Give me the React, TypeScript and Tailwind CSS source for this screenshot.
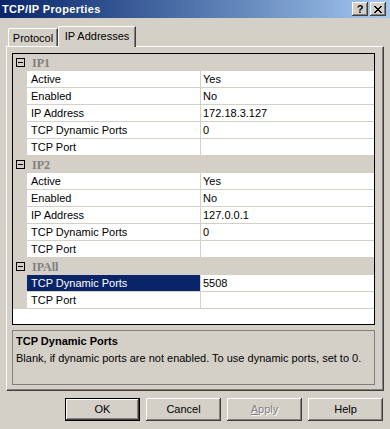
import React from "react";

type Item = { label: string; value: string; selected?: boolean };
type Group = { name: string; items: Item[] };

const groups: Group[] = [
  {
    name: "IP1",
    items: [
      { label: "Active", value: "Yes" },
      { label: "Enabled", value: "No" },
      { label: "IP Address", value: "172.18.3.127" },
      { label: "TCP Dynamic Ports", value: "0" },
      { label: "TCP Port", value: "" },
    ],
  },
  {
    name: "IP2",
    items: [
      { label: "Active", value: "Yes" },
      { label: "Enabled", value: "No" },
      { label: "IP Address", value: "127.0.0.1" },
      { label: "TCP Dynamic Ports", value: "0" },
      { label: "TCP Port", value: "" },
    ],
  },
  {
    name: "IPAll",
    items: [
      { label: "TCP Dynamic Ports", value: "5508", selected: true },
      { label: "TCP Port", value: "" },
    ],
  },
];

function Btn({ children, def, disabled }: { children: React.ReactNode; def?: boolean; disabled?: boolean }) {
  return (
    <div
      className={
        "w-[75px] h-[23px] flex items-center justify-center bg-[#d4d0c8] " +
        (def
          ? "border border-black shadow-[inset_-1px_-1px_0_#404040,inset_1px_1px_0_#ffffff,inset_-2px_-2px_0_#808080]"
          : "shadow-[inset_-1px_-1px_0_#404040,inset_1px_1px_0_#ffffff,inset_-2px_-2px_0_#808080]") +
        (disabled ? " text-[#808080] [text-shadow:1px_1px_0_#ffffff]" : " text-black")
      }
    >
      {children}
    </div>
  );
}

export default function App() {
  return (
    <div className="w-[390px] h-[429px] bg-[#d4d0c8] text-[11px] leading-none text-black overflow-hidden font-['Liberation_Sans',Arial,sans-serif] flex flex-col">
      {/* Title bar */}
      <div className="h-[18px] shrink-0 flex items-center bg-linear-to-r from-[#0a246a] to-[#a6caf0]">
        <span className="pl-[2px] text-white font-bold text-[11px] tracking-[0.35px]">TCP/IP Properties</span>
        <div className="ml-auto mr-[4px] flex gap-[2px]">
          <div className="w-[16px] h-[14px] bg-[#d4d0c8] flex items-center justify-center font-bold text-[11px] text-black shadow-[inset_-1px_-1px_0_#404040,inset_1px_1px_0_#ffffff,inset_-2px_-2px_0_#808080]">
            ?
          </div>
          <div className="w-[16px] h-[14px] bg-[#d4d0c8] flex items-center justify-center shadow-[inset_-1px_-1px_0_#404040,inset_1px_1px_0_#ffffff,inset_-2px_-2px_0_#808080]">
            <svg width="8" height="7" viewBox="0 0 8 7" shapeRendering="crispEdges">
              <path d="M0 0h2v1H0zM6 0h2v1H6zM1 1h2v1H1zM5 1h2v1H5zM2 2h4v1H2zM3 3h2v1H3zM2 4h4v1H2zM1 5h2v1H1zM5 5h2v1H5zM0 6h2v1H0zM6 6h2v1H6z" fill="#000" />
            </svg>
          </div>
        </div>
      </div>

      {/* Tabs */}
      <div className="h-[28px] shrink-0 flex items-end pl-[8px]">
        <div className="w-[50px] h-[18px] border-l border-t border-white rounded-tl-[2px] shadow-[inset_-1px_0_0_#808080] border-r border-r-[#404040] flex items-center justify-center pt-[2px]">
          Protocol
        </div>
        <div className="relative z-10 -mb-px w-[78px] h-[21px] bg-[#d4d0c8] border-l border-t border-white rounded-tl-[2px] border-r border-r-[#404040] shadow-[inset_-1px_0_0_#808080] flex items-center justify-center pb-[2px]">
          IP Addresses
        </div>
      </div>

      {/* Panel */}
      <div className="ml-[6px] w-[378px] h-[345px] shrink-0 border border-t-white border-l-white border-r-[#404040] border-b-[#404040] shadow-[inset_-1px_-1px_0_#808080] pl-[5px] pt-[6px] flex flex-col">
        {/* Property grid */}
        <div className="w-[363px] h-[272px] border border-black bg-white flex flex-col">
          {groups.map((g) => (
            <React.Fragment key={g.name}>
              <div className="h-[17px] shrink-0 bg-[#d4d0c8] flex items-center">
                <div className="ml-[3px] w-[9px] h-[9px] border border-black flex items-center justify-center">
                  <div className="w-[5px] h-px bg-black" />
                </div>
                <span className="ml-[7px] font-bold text-[#808080] text-[12px] font-['Liberation_Serif',serif]">{g.name}</span>
              </div>
              {g.items.map((it, i) => (
                <div key={i} className="h-[17px] shrink-0 flex">
                  <div className="w-[14px] bg-[#d4d0c8]" />
                  <div
                    className={
                      "w-[174px] border-r border-b border-[#d4d0c8] flex items-center pl-[4px] " +
                      (it.selected ? "bg-[#0a246a] text-white" : "")
                    }
                  >
                    {it.label}
                  </div>
                  <div className="flex-1 border-b border-[#d4d0c8] flex items-center pl-[2px]">{it.value}</div>
                </div>
              ))}
            </React.Fragment>
          ))}
          <div className="flex-1 bg-white" />
        </div>

        {/* Description */}
        <div className="mt-[5px] w-[363px] h-[55px] border border-[#808080] pl-[3px] pt-[5px] flex flex-col">
          <div className="font-bold text-[11px]">TCP Dynamic Ports</div>
          <div className="mt-[6px]">Blank, if dynamic ports are not enabled. To use dynamic ports, set to 0.</div>
        </div>
      </div>

      {/* Buttons */}
      <div className="mt-[7px] flex justify-end gap-[6px] pr-[7px]">
        <Btn def>OK</Btn>
        <Btn>Cancel</Btn>
        <Btn disabled>
          <span>
            <span className="underline">A</span>pply
          </span>
        </Btn>
        <Btn>Help</Btn>
      </div>
    </div>
  );
}
